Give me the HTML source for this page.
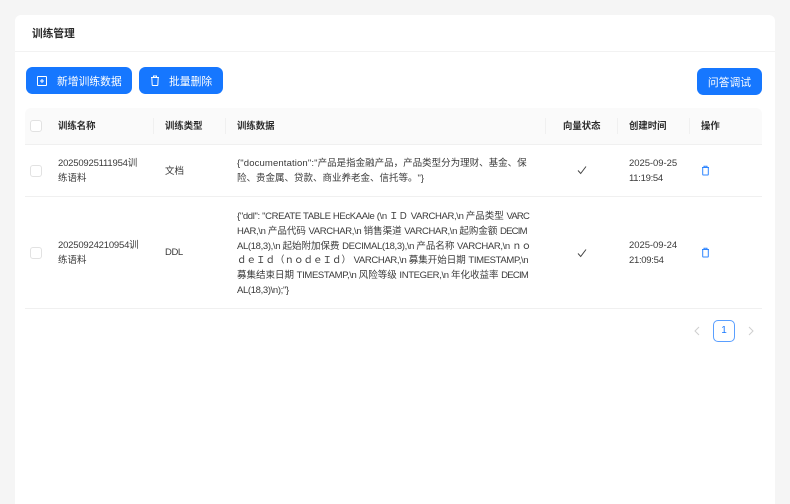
<!DOCTYPE html>
<html><head><meta charset="utf-8">
<style>
*{box-sizing:border-box;margin:0;padding:0}
html,body{width:790px;height:504px;overflow:hidden;background:#f5f5f5}
body{position:relative;font-family:"Liberation Sans","Noto Sans CJK SC",sans-serif;font-size:9.5px;color:#333}
.a{position:absolute;white-space:nowrap}
.card{left:15px;top:15px;width:760px;height:489px;background:#fff;border-radius:6px 6px 0 0}
.btn{background:#1677ff;border-radius:6.5px;color:#fff;font-size:10.8px;line-height:30px;height:27px}
.th{font-weight:700;color:#2a2a2a;line-height:14px;top:119px;font-size:9.4px}
.sep{width:1px;height:16px;top:118px;background:#f0f0f0}
.cb{width:12px;height:12px;border:1px solid #e2e2e2;border-radius:3px;background:#fff;left:30px}
.l{line-height:15px;font-size:9.5px;color:#3a3a3a}
.d{line-height:14.8px;font-size:9.5px;color:#3a3a3a;left:237px}
.u{letter-spacing:-.35px}
.v{letter-spacing:-.75px}
svg{position:absolute}
</style></head><body>
<div class="a card"></div>
<div class="a" style="left:32px;top:26px;font-size:10.7px;font-weight:700;line-height:16px;color:#2a2a2a">训练管理</div>
<div class="a" style="left:15px;top:51px;width:760px;height:1px;background:#f2f2f2"></div>

<div class="a btn" style="left:26px;top:67px;width:106px"><span class="a" style="left:31px;top:0">新增训练数据</span></div>
<svg style="left:37px;top:76px" width="10" height="10" viewBox="0 0 10 10" fill="none" stroke="#fff" stroke-width="1"><rect x=".5" y=".5" width="9" height="9" rx=".5"/><path d="M3 5h4M5 3v4"/></svg>
<div class="a btn" style="left:139px;top:67px;width:84px"><span class="a" style="left:30px;top:0">批量删除</span></div>
<svg style="left:150px;top:75px" width="10" height="11" viewBox="0 0 10 11" fill="none" stroke="#fff" stroke-width="1"><path d="M1 2.5h8M3.5 2.5V1h3v1.5M1.8 2.5l.4 7.5a.5.5 0 0 0 .5.5h4.6a.5.5 0 0 0 .5-.5l.4-7.5"/></svg>
<div class="a btn" style="left:697px;top:68px;width:65px;text-align:center">问答调试</div>

<div class="a" style="left:25px;top:108px;width:737px;height:37px;background:#fafafa;border-radius:6px 6px 0 0;border-bottom:1px solid #f0f0f0"></div>
<div class="a cb" style="top:120px"></div>
<div class="a th" style="left:58px">训练名称</div>
<div class="a sep" style="left:153px"></div>
<div class="a th" style="left:165px">训练类型</div>
<div class="a sep" style="left:225px"></div>
<div class="a th" style="left:237px">训练数据</div>
<div class="a sep" style="left:545px"></div>
<div class="a th" style="left:563px">向量状态</div>
<div class="a sep" style="left:617px"></div>
<div class="a th" style="left:629px">创建时间</div>
<div class="a sep" style="left:689px"></div>
<div class="a th" style="left:701px">操作</div>

<div class="a cb" style="top:165px"></div>
<div class="a l" style="left:58px;top:156px"><span style="letter-spacing:-.2px">20250925111954</span>训<br>练语料</div>
<div class="a l" style="left:165px;top:164px">文档</div>
<div class="a d" style="top:157px"><span style="letter-spacing:.13px">{"documentation":"</span>产品是指金融产品，产品类型分为理财、基金、保<br>险、贵金属、贷款、商业养老金、信托等。"}</div>
<svg style="left:577px;top:165px" width="10" height="10" viewBox="0 0 10 10" fill="none" stroke="#444" stroke-width="1"><path d="M1 5.5l2.7 3L9 1.5"/></svg>
<div class="a l" style="left:629px;top:156px"><span style="letter-spacing:-.05px">2025-09-25</span><br><span style="letter-spacing:-.3px">11:19:54</span></div>
<svg style="left:701px;top:165px" width="9" height="11" viewBox="0 0 9 11" fill="none" stroke="#2f86ff" stroke-width="1"><path d="M1 2.5h7M3 2.5V1.2h3v1.3M1.7 2.5v7a.5.5 0 0 0 .5.5h4.6a.5.5 0 0 0 .5-.5v-7"/></svg>
<div class="a" style="left:25px;top:196px;width:737px;height:1px;background:#f0f0f0"></div>

<div class="a cb" style="top:247px"></div>
<div class="a l" style="left:58px;top:238px"><span style="letter-spacing:-.2px">20250924210954</span>训<br>练语料</div>
<div class="a l" style="left:165px;top:245px;letter-spacing:-.4px">DDL</div>
<div class="a d" style="top:210px"><span class="u">{"ddl": "CREATE TABLE HEcKAAle (\n </span>ＩＤ <span class="u">VARCHAR,\n </span>产品类型 <span class="v">VARC</span><br><span class="u">HAR,\n </span>产品代码 <span class="u">VARCHAR,\n </span>销售渠道 <span class="u">VARCHAR,\n </span>起购金额 <span class="v">DECIM</span><br><span class="u">AL(18,3),\n </span>起始附加保费 <span class="u">DECIMAL(18,3),\n </span>产品名称 <span class="u">VARCHAR,\n </span>ｎｏ<br>ｄｅＩｄ（ｎｏｄｅＩｄ） <span class="u">VARCHAR,\n </span>募集开始日期 <span class="u">TIMESTAMP,\n</span><br>募集结束日期 <span class="u">TIMESTAMP,\n </span>风险等级 <span class="u">INTEGER,\n </span>年化收益率 <span class="v">DECIM</span><br><span class="u">AL(18,3)\n);"}</span></div>
<svg style="left:577px;top:248px" width="10" height="10" viewBox="0 0 10 10" fill="none" stroke="#444" stroke-width="1"><path d="M1 5.5l2.7 3L9 1.5"/></svg>
<div class="a l" style="left:629px;top:238px"><span style="letter-spacing:-.05px">2025-09-24</span><br><span style="letter-spacing:-.3px">21:09:54</span></div>
<svg style="left:701px;top:247px" width="9" height="11" viewBox="0 0 9 11" fill="none" stroke="#2f86ff" stroke-width="1"><path d="M1 2.5h7M3 2.5V1.2h3v1.3M1.7 2.5v7a.5.5 0 0 0 .5.5h4.6a.5.5 0 0 0 .5-.5v-7"/></svg>
<div class="a" style="left:25px;top:308px;width:737px;height:1px;background:#f0f0f0"></div>

<svg style="left:693px;top:326px" width="8" height="10" viewBox="0 0 8 10" fill="none" stroke="#cfcfcf" stroke-width="1"><path d="M6 1L2 5l4 4"/></svg>
<div class="a" style="left:713px;top:320px;width:22px;height:22px;border:1px solid #5a9fff;border-radius:5px;color:#1677ff;text-align:center;line-height:20px;font-size:10px">1</div>
<svg style="left:747px;top:326px" width="8" height="10" viewBox="0 0 8 10" fill="none" stroke="#cfcfcf" stroke-width="1"><path d="M2 1l4 4-4 4"/></svg>
</body></html>
